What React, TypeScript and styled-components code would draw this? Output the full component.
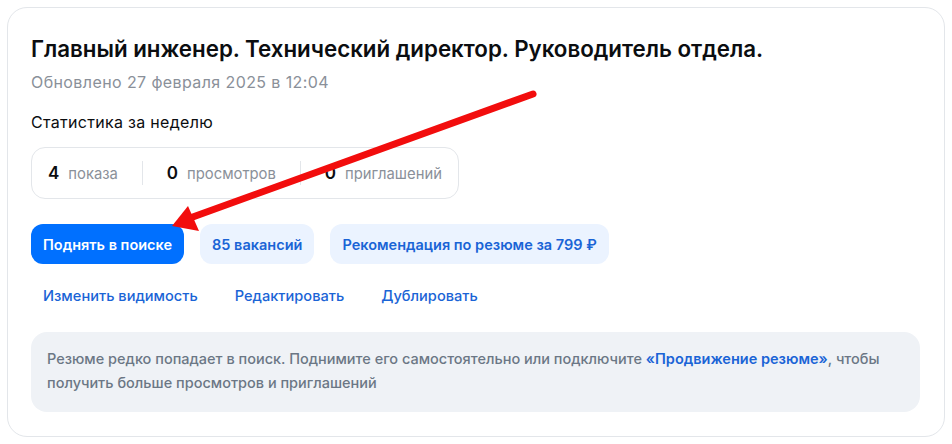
import styled, { createGlobalStyle } from "styled-components";

const GlobalStyle = createGlobalStyle`
  body {
    margin: 0;
    background: #ffffff;
    font-family: Inter, "Noto Sans", sans-serif;
    color: #000;
  }
`;

const Page = styled.div`
  position: relative;
  padding: 7px;
  width: 952px;
  height: 444px;
  box-sizing: border-box;
`;

const Card = styled.section`
  border: 1px solid #e3e6ea;
  border-radius: 20px;
  padding: 27px 24px 23px 23px;
  box-sizing: border-box;
  height: 430px;
`;

const Title = styled.h1`
  margin: 0;
  font-size: 22.3px;
  line-height: 28px;
  font-weight: 600;
  color: #0b0d10;
`;

const Updated = styled.div`
  margin-top: 7px;
  font-size: 16px;
  letter-spacing: 0.4px;
  line-height: 24px;
  color: #8a9099;
`;

const StatsLabel = styled.div`
  margin-top: 16px;
  font-size: 16px;
  letter-spacing: 0.3px;
  line-height: 24px;
  color: #0b0d10;
`;

const StatsBox = styled.div`
  margin-top: 13px;
  display: inline-flex;
  align-items: center;
  height: 52px;
  box-sizing: border-box;
  padding: 0 16px;
  border: 1px solid #e3e6ea;
  border-radius: 14px;
`;

const Stat = styled.div`
  display: flex;
  align-items: baseline;
  gap: 9px;
  font-size: 14.8px;
`;

const StatValue = styled.span`
  font-weight: 600;
  font-size: 17px;
  color: #0b0d10;
`;

const StatText = styled.span`
  color: #8a9099;
`;

const Divider = styled.div`
  width: 1px;
  height: 24px;
  background: #e3e6ea;
  margin: 0 24px;
`;

const Actions = styled.div`
  margin-top: 25px;
  display: flex;
  gap: 16px;
`;

const Button = styled.button<{ $primary?: boolean }>`
  height: 40px;
  padding: 0 12px;
  border: none;
  border-radius: 12px;
  font-family: inherit;
  font-size: 14.5px;
  font-weight: 600;
  background: ${(p) => (p.$primary ? "#0070ff" : "#ebf3ff")};
  color: ${(p) => (p.$primary ? "#ffffff" : "#1a64d6")};
`;

const Links = styled.div`
  margin-top: 12px;
  display: flex;
  gap: 13px;
`;

const LinkButton = styled.button`
  height: 40px;
  padding: 0 12px;
  border: none;
  background: none;
  font-family: inherit;
  font-size: 14.6px;
  font-weight: 500;
  color: #1a64d6;
`;

const Hint = styled.div`
  margin-top: 16px;
  background: #eff2f6;
  border-radius: 16px;
  padding: 15px 16px 17px;
  font-size: 14.5px;
  line-height: 24px;
  font-weight: 500;
  color: #6b7785;
`;

const HintLink = styled.span`
  color: #1a64d6;
  font-weight: 600;
`;

const Arrow = styled.svg`
  position: absolute;
  left: 0;
  top: 0;
  pointer-events: none;
`;

const stats = [
  { value: 4, label: "показа" },
  { value: 0, label: "просмотров" },
  { value: 0, label: "приглашений" },
];

export default function App() {
  return (
    <Page>
      <GlobalStyle />
      <Card>
        <Title>Главный инженер. Технический директор. Руководитель отдела.</Title>
        <Updated>Обновлено 27 февраля 2025 в 12:04</Updated>
        <StatsLabel>Статистика за неделю</StatsLabel>
        <StatsBox>
          {stats.map((s, i) => (
            <>
              {i > 0 && <Divider key={"d" + i} />}
              <Stat key={s.label}>
                <StatValue>{s.value}</StatValue>
                <StatText>{s.label}</StatText>
              </Stat>
            </>
          ))}
        </StatsBox>
        <Actions>
          <Button $primary>Поднять в поиске</Button>
          <Button>85 вакансий</Button>
          <Button>Рекомендация по резюме за 799 ₽</Button>
        </Actions>
        <Links>
          <LinkButton>Изменить видимость</LinkButton>
          <LinkButton>Редактировать</LinkButton>
          <LinkButton>Дублировать</LinkButton>
        </Links>
        <Hint>
          Резюме редко попадает в поиск. Поднимите его самостоятельно или подключите{" "}
          <HintLink>«Продвижение резюме»</HintLink>, чтобы получить больше просмотров и
          приглашений
        </Hint>
      </Card>
      <Arrow width="952" height="444" viewBox="0 0 952 444">
        <line x1="533" y1="94" x2="190" y2="218" stroke="#f20d0d" strokeWidth="7" strokeLinecap="round" />
        <polygon points="172,226 188,206 199,231" fill="#f20d0d" />
      </Arrow>
    </Page>
  );
}
